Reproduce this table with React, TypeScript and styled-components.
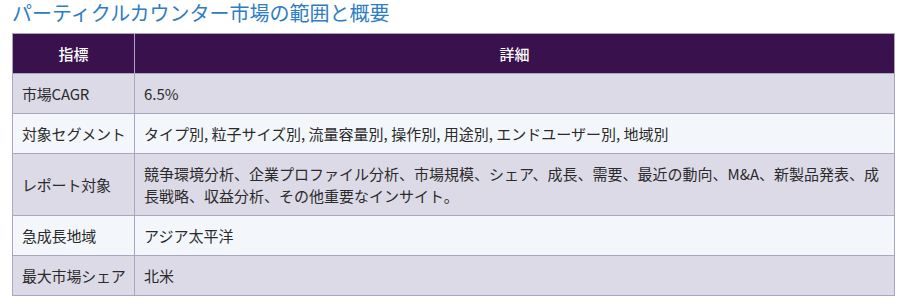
import styled, { createGlobalStyle } from "styled-components";

const COLORS = {
  TITLE: "#2e7dc4",
  HEAD_BG: "#38114d",
  ROW_ODD: "#dddae8",
  ROW_EVEN: "#f3f7fb",
  BORDER: "#aaa5c2",
  TEXT: "#2b2b2b"
};

const ROWS: { label: string; detail: string }[] = [
  { label: "市場CAGR", detail: "6.5%" },
  {
    label: "対象セグメント",
    detail:
      "タイプ別, 粒子サイズ別, 流量容量別, 操作別, 用途別, エンドユーザー別, 地域別"
  },
  {
    label: "レポート対象",
    detail:
      "競争環境分析、企業プロファイル分析、市場規模、シェア、成長、需要、最近の動向、M&A、新製品発表、成長戦略、収益分析、その他重要なインサイト。"
  },
  { label: "急成長地域", detail: "アジア太平洋" },
  { label: "最大市場シェア", detail: "北米" }
];

const App = () => (
  <>
    <GlobalStyle />
    <Page>
      <Title>パーティクルカウンター市場の範囲と概要</Title>
      <Table>
        <colgroup>
          <col style={{ width: 122 }} />
          <col />
        </colgroup>
        <thead>
          <tr>
            <HeadCell>指標</HeadCell>
            <HeadCell>詳細</HeadCell>
          </tr>
        </thead>
        <tbody>
          {ROWS.map(({ label, detail }, index) => (
            <Row key={label} $odd={index % 2 === 0}>
              <LabelCell>{label}</LabelCell>
              <Cell>{detail}</Cell>
            </Row>
          ))}
        </tbody>
      </Table>
    </Page>
  </>
);

const GlobalStyle = createGlobalStyle`
  html, body {
    margin: 0;
    background: #ffffff;
  }
  body {
    font-family: "Noto Sans CJK JP", "Noto Sans", sans-serif;
    color: ${COLORS.TEXT};
  }
`;

const Page = styled.div`
  width: 910px;
  height: 304px;
  padding: 1px 15px 0 12px;
  box-sizing: border-box;
  overflow: hidden;
`;

const Title = styled.h2`
  margin: 0 0 8px;
  font-size: 20px;
  line-height: 24px;
  font-weight: 400;
  color: ${COLORS.TITLE};
`;

const Table = styled.table`
  width: 883px;
  border-collapse: collapse;
  table-layout: fixed;
  font-size: 15px;
  line-height: 22px;
`;

const HeadCell = styled.th`
  background: ${COLORS.HEAD_BG};
  color: #ffffff;
  font-weight: 500;
  text-align: center;
  padding: 8.5px 9px;
  border: 1px solid ${COLORS.BORDER};
`;

const Row = styled.tr<{ $odd: boolean }>`
  background: ${({ $odd }) => ($odd ? COLORS.ROW_ODD : COLORS.ROW_EVEN)};
`;

const Cell = styled.td`
  padding: 8.5px 9px;
  border: 1px solid ${COLORS.BORDER};
  vertical-align: middle;
`;

const LabelCell = styled(Cell)`
  padding-right: 4px;
  white-space: nowrap;
  letter-spacing: -0.2px;
`;

export default App;
